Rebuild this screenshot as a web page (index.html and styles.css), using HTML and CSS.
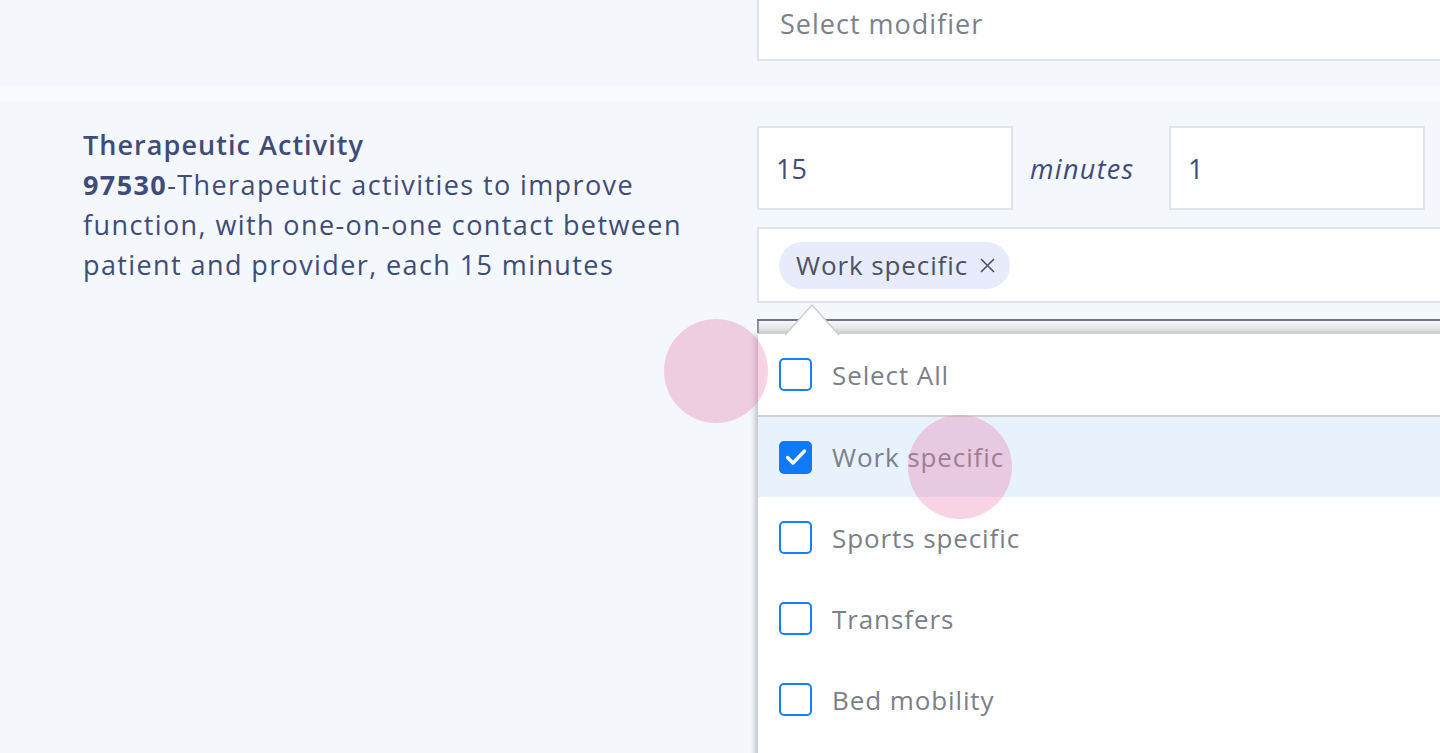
FILE: index.html
```html
<!DOCTYPE html>
<html lang="en">
<head>
<meta charset="utf-8">
<title>Therapeutic Activity</title>
<link rel="stylesheet" href="styles.css">
</head>
<body>
<div class="page">
  <section class="top">
    <div class="top-left"></div>
    <div class="top-right">
      <div class="field placeholder">Select modifier</div>
    </div>
  </section>
  <div class="band"></div>
  <section class="row">
    <div class="desc">
      <div class="title">Therapeutic Activity</div>
      <p class="text"><b>97530</b>-Therapeutic activities to improve<br>function, with one-on-one contact between<br>patient and provider, each 15 minutes</p>
    </div>
    <div class="controls">
      <div class="units">
        <div class="box">15</div>
        <span class="unit">minutes</span>
        <div class="box">1</div>
      </div>
      <div class="tags">
        <span class="chip">Work specific
          <svg class="chip-x" width="17" height="17" viewBox="0 0 17 17"><path d="M2 2L15 15M15 2L2 15" stroke="#4b5262" stroke-width="1.6" fill="none"/></svg>
        </span>
      </div>
      <div class="dropdown">
        <svg class="caret" width="56" height="32" viewBox="0 0 56 32"><path d="M0 31 L27 1 L54 31" fill="#fff" stroke="#c9ccd2" stroke-width="1.3"/></svg>
        <div class="dd-head"></div>
        <ul class="list">
          <li class="item first"><span class="cb"></span>Select All</li>
          <li class="item active"><span class="cb on"><svg width="24" height="20" viewBox="0 0 24 20"><path d="M3.5 10.5 L9 16 L20.5 4" stroke="#fff" stroke-width="3.4" fill="none" stroke-linecap="round" stroke-linejoin="round"/></svg></span>Work specific</li>
          <li class="item"><span class="cb"></span>Sports specific</li>
          <li class="item"><span class="cb"></span>Transfers</li>
          <li class="item"><span class="cb"></span>Bed mobility</li>
        </ul>
      </div>
    </div>
  </section>
  <span class="touch t1"></span>
  <span class="touch t2"></span>
</div>
</body>
</html>
```

FILE: styles.css
```css
html, body {
  margin: 0;
  padding: 0;
  background: #f4f7fc;
  overflow: hidden;
  height: 753px;
}
body {
  font-family: "Open Sans", "Noto Sans", sans-serif;
  color: #3e4c7a;
}
.page {
  position: relative;
  width: 1440px;
  height: 753px;
  overflow: hidden;
}
.top {
  display: grid;
  grid-template-columns: 757px 760px;
  height: 86px;
}
.field {
  box-sizing: border-box;
  margin-top: -15px;
  height: 76px;
  border: 2px solid #dfe4ec;
  background: #fff;
  display: flex;
  align-items: center;
  padding-left: 21px;
  font-size: 27px;
  letter-spacing: 1px;
}
.placeholder {
  color: #7c818c;
}
.band {
  height: 16px;
  background: #f9fafb;
}
.row {
  display: grid;
  grid-template-columns: 757px 760px;
  padding-top: 24px;
}
.desc {
  padding-left: 83px;
}
.title {
  font-size: 27px;
  font-weight: 600;
  line-height: 40px;
  letter-spacing: 1.05px;
  margin-top: -1px;
}
.text {
  margin: 0;
  font-size: 27px;
  line-height: 40px;
  letter-spacing: 1.4px;
}
.text b {
  font-weight: 700;
}
.controls {
  display: flex;
  flex-direction: column;
}
.units {
  display: flex;
  align-items: center;
}
.box {
  box-sizing: border-box;
  width: 256px;
  height: 84px;
  background: #fff;
  border: 2px solid #dfe4ec;
  display: flex;
  align-items: center;
  padding-left: 17px;
  font-size: 27px;
  font-weight: 500;
  color: #3e4c7a;
}
.unit {
  width: 156px;
  padding-left: 17px;
  box-sizing: border-box;
  font-size: 27px;
  font-style: italic;
  font-weight: 500;
  letter-spacing: 1.3px;
  color: #3e4c7a;
}
.tags {
  box-sizing: border-box;
  margin-top: 17px;
  height: 76px;
  background: #fff;
  border: 2px solid #dfe4ec;
  display: flex;
  align-items: center;
  padding-left: 20px;
}
.chip {
  display: inline-flex;
  align-items: center;
  gap: 11px;
  height: 47px;
  padding: 0 14px 0 17px;
  border-radius: 24px;
  background: #e8ebfb;
  color: #4b5262;
  font-size: 26px;
  letter-spacing: 0.9px;
  box-sizing: border-box;
}
.chip-x {
  display: block;
}
.dropdown {
  position: relative;
  margin-top: 16px;
  border-top: 2px solid #6e7689;
}
.caret {
  position: absolute;
  left: 28px;
  top: -17px;
  display: block;
}
.dd-head {
  height: 12px;
  border-left: 2px solid #8d93a2;
  background: linear-gradient(#f8f8f9, #e6e6e8 60%, #cfd0d2);
}
.list {
  list-style: none;
  margin: 0 0 0 1px;
  padding: 0 0 40px;
  background: #fff;
  box-shadow: -5px 0 5px -2px rgba(60, 66, 80, 0.28);
  border-top: 1px solid #d0d1d3;
}
.item {
  display: flex;
  align-items: center;
  gap: 20px;
  height: 81px;
  padding-left: 21px;
  font-size: 26px;
  letter-spacing: 0.9px;
  color: #7a7f89;
}
.item.first {
  border-bottom: 2px solid #d0d1d4;
}
.item.active {
  background: #e8f2fd;
  height: 80px;
}
.cb {
  box-sizing: border-box;
  width: 33px;
  height: 33px;
  border: 2px solid #1a7ef5;
  border-radius: 5px;
  display: flex;
  align-items: center;
  justify-content: center;
  flex: none;
}
.cb.on {
  background: #0f7af5;
  border-color: #0f7af5;
}
.cb svg {
  display: block;
}
.touch {
  position: absolute;
  width: 104px;
  height: 104px;
  border-radius: 50%;
  background: rgba(230, 120, 170, 0.33);
  pointer-events: none;
}
.t1 {
  left: 664px;
  top: 319px;
}
.t2 {
  left: 908px;
  top: 415px;
}
```
